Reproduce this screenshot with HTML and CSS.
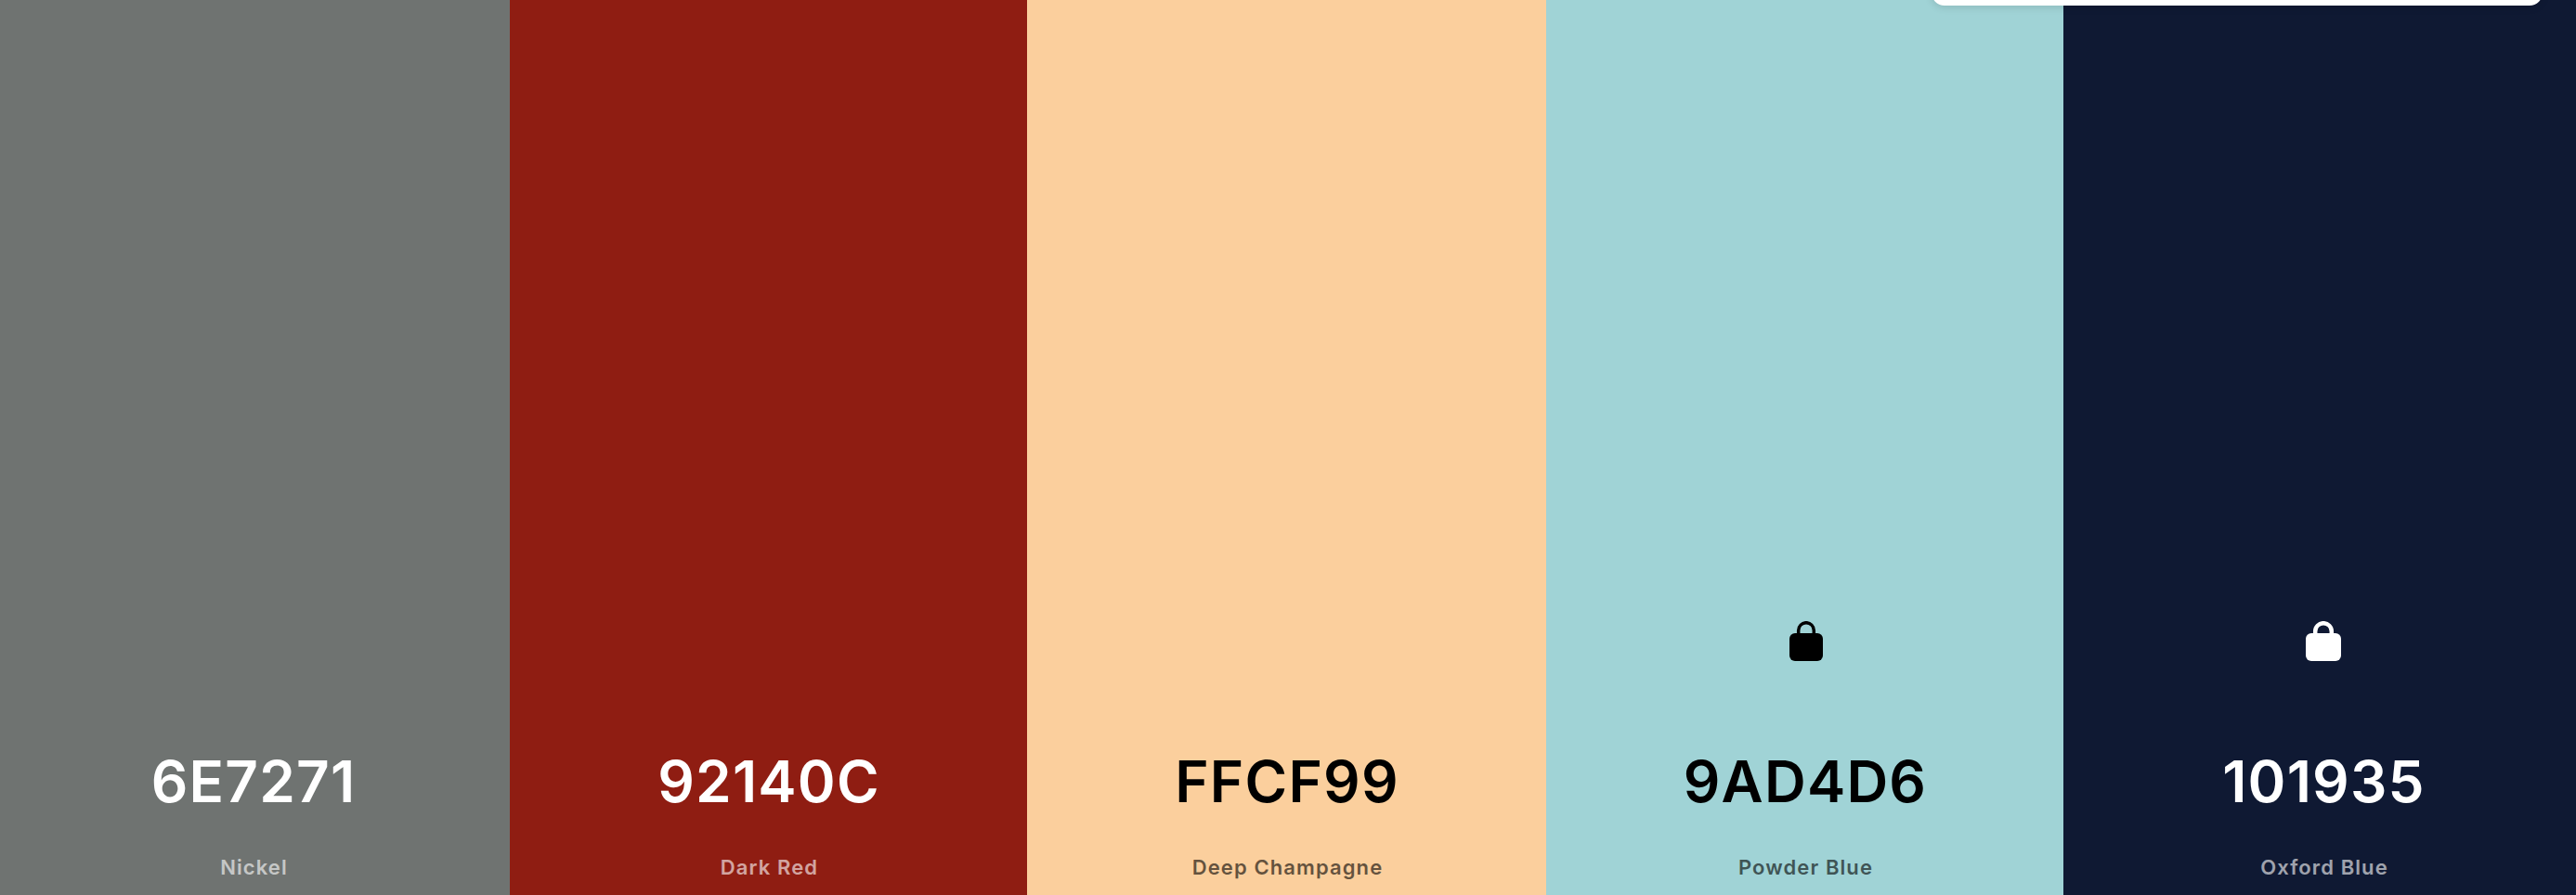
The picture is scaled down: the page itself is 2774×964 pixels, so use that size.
FILE: index.html
```html
<!DOCTYPE html>
<html lang="en">
<head>
    <meta charset="UTF-8">
    <title>Palette</title>
    <link rel="stylesheet" href="styles.css">
</head>
<body>
    <div class="palette">
        <div class="swatch nickel">
            <div class="hex">6E7271</div>
            <div class="name">Nickel</div>
        </div>
        <div class="swatch dark-red">
            <div class="hex">92140C</div>
            <div class="name">Dark Red</div>
        </div>
        <div class="swatch champagne">
            <div class="hex">FFCF99</div>
            <div class="name">Deep Champagne</div>
        </div>
        <div class="swatch powder">
            <svg class="lock" width="44" height="44" viewBox="0 0 44 44">
                <path fill="none" stroke="currentColor" stroke-width="3.5" d="M13.7 16V10a8.3 8.3 0 0 1 16.6 0v6"/>
                <rect x="4" y="13" width="36" height="30" rx="6" fill="currentColor"/>
            </svg>
            <div class="hex">9AD4D6</div>
            <div class="name">Powder Blue</div>
        </div>
        <div class="swatch oxford">
            <svg class="lock" width="44" height="44" viewBox="0 0 44 44">
                <path fill="none" stroke="currentColor" stroke-width="4.5" d="M13.2 16V11a8.8 8.8 0 0 1 17.6 0v5"/>
                <rect x="3" y="13" width="38" height="30" rx="6" fill="currentColor"/>
            </svg>
            <div class="hex">101935</div>
            <div class="name">Oxford Blue</div>
        </div>
        <div class="toolbar"></div>
    </div>
</body>
</html>
```

FILE: styles.css
```css
body {
    margin: 0;
    font-family: Inter, sans-serif;
    overflow: hidden;
}
.palette {
    display: flex;
    height: 964px;
    margin-left: -4px;
    position: relative;
}
.swatch {
    display: flex;
    flex-direction: column;
    align-items: center;
    justify-content: flex-end;
    flex-shrink: 0;
    color: #fff;
    padding-bottom: 16px;
    box-sizing: border-box;
}
.lock {
    margin-bottom: 90px;
}
.powder .lock {
    margin-left: 2px;
}
.hex {
    font-size: 62px;
    line-height: 78px;
    font-weight: 600;
    letter-spacing: 1.2px;
    padding-left: 1px;
}
.name {
    font-size: 22px;
    line-height: 28px;
    font-weight: 600;
    letter-spacing: 1.1px;
    padding-left: 2px;
    margin-top: 39px;
    opacity: 0.6;
}
.nickel { width: 553px; background-color: #6f7371; }
.dark-red { width: 557px; background-color: #8f1d12; }
.champagne { width: 559px; background-color: #fbcf9d; color: #000; }
.powder { width: 557px; background-color: #a0d3d6; color: #000; }
.oxford { width: 560px; background-color: #0f1933; }
.toolbar {
    position: absolute;
    top: -40px;
    left: 2084px;
    width: 658px;
    height: 46px;
    background-color: #fff;
    border-radius: 14px;
    box-shadow: 0 2px 8px rgba(0,0,0,0.12);
}
```
